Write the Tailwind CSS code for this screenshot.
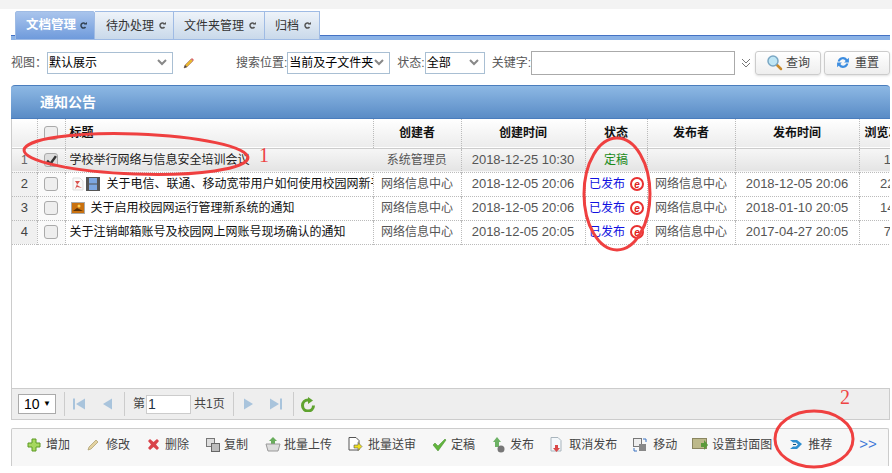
<!DOCTYPE html>
<html lang="zh-CN">
  <head>
    <meta charset="UTF-8" />
    <title>文档管理</title>
    <script src="https://cdn.jsdelivr.net/npm/@tailwindcss/browser@4"></script>
  </head>
  <body class="bg-white">
    <div class="relative w-[892px] h-[473px] overflow-hidden text-[12px] text-[#444] font-['Liberation_Sans','Noto_Sans_CJK_SC',sans-serif]">
      <div class="h-[9px] bg-[#f3f3f3]"></div>

      <!-- tabs -->
      <div class="ml-[11px] w-[879px] h-[31px] pt-[2px] pl-[4px] flex items-stretch relative border-b-[4px] border-[#8ab2e6]">
        <div class="absolute left-0 right-0 bottom-0 h-px bg-[#4472c4]"></div>
        <div class="relative w-[80px] h-[29px] flex items-center pl-[10px] gap-[4px] border border-[#9fbbe4] bg-gradient-to-b from-[#a9c4ec] to-[#6f9bdc] text-white font-bold text-[12.5px] rounded-t-[2px]">文档管理<svg width="7" height="7" viewBox="0 0 7 7"><path d="M5.500 2A2.500 2.500 0 1 0 5.500 5" fill="none" stroke="#345" stroke-width="1.500"/><path d="M4 2.500h3V0z" fill="#345"/></svg></div>
        <div class="relative w-[79px] h-[29px] flex items-center pl-[11px] gap-[5px] border border-[#9fbbe4] border-l-0 bg-gradient-to-b from-[#eef3f9] to-[#c9d9ea] text-[#333]">待办处理<svg width="7" height="7" viewBox="0 0 7 7"><path d="M5.500 2A2.500 2.500 0 1 0 5.500 5" fill="none" stroke="#555" stroke-width="1.500"/><path d="M4 2.500h3V0z" fill="#555"/></svg></div>
        <div class="relative w-[91px] h-[29px] flex items-center pl-[10px] gap-[5px] border border-[#9fbbe4] border-l-0 bg-gradient-to-b from-[#eef3f9] to-[#c9d9ea] text-[#333]">文件夹管理<svg width="7" height="7" viewBox="0 0 7 7"><path d="M5.500 2A2.500 2.500 0 1 0 5.500 5" fill="none" stroke="#555" stroke-width="1.500"/><path d="M4 2.500h3V0z" fill="#555"/></svg></div>
        <div class="relative w-[55px] h-[29px] flex items-center pl-[10px] gap-[5px] border border-[#9fbbe4] border-l-0 bg-gradient-to-b from-[#eef3f9] to-[#c9d9ea] text-[#333]">归档<svg width="7" height="7" viewBox="0 0 7 7"><path d="M5.500 2A2.500 2.500 0 1 0 5.500 5" fill="none" stroke="#555" stroke-width="1.500"/><path d="M4 2.500h3V0z" fill="#555"/></svg></div>
      </div>

      <!-- filters -->
      <div class="h-[45px] pl-[11px] flex items-center text-[#555] whitespace-nowrap">
        <span class="w-[36px] shrink-0">视图：</span>
        <div class="shrink-0 w-[126px] h-[22px] border border-[#a9bfd3] flex items-center justify-between pr-[5px] pl-px text-black">默认展示
          <svg width="10" height="7" viewBox="0 0 10 7"><path d="M1 1l4 4 4-4" fill="none" stroke="#888" stroke-width="2"/></svg>
        </div>
        <svg class="shrink-0 ml-[10px]" width="12" height="12" viewBox="0 0 12 12"><path d="M1 11l1-3 6-6 2 2-6 6z" fill="#e8b830" stroke="#a77" stroke-width=".6"/><path d="M8 2l1-1 2 2-1 1z" fill="#d66"/><path d="M1 11l1-3 2 2z" fill="#444"/></svg>
        <span class="shrink-0 ml-[41px]">搜索位置:</span>
        <div class="shrink-0 w-[103px] h-[22px] border border-[#a9bfd3] flex items-center justify-between pr-[5px] pl-px text-black">当前及子文件夹
          <svg width="10" height="7" viewBox="0 0 10 7"><path d="M1 1l4 4 4-4" fill="none" stroke="#888" stroke-width="2"/></svg>
        </div>
        <span class="shrink-0 ml-[7px]">状态:</span>
        <div class="shrink-0 w-[60px] h-[22px] border border-[#a9bfd3] flex items-center justify-between pr-[5px] pl-px text-black">全部
          <svg width="10" height="7" viewBox="0 0 10 7"><path d="M1 1l4 4 4-4" fill="none" stroke="#888" stroke-width="2"/></svg>
        </div>
        <span class="shrink-0 ml-[7px]">关键字:</span>
        <div class="shrink-0 w-[204px] h-[24px] border border-[#aaa] bg-white"></div>
        <svg class="shrink-0 ml-[6px]" width="10" height="10" viewBox="0 0 10 10"><path d="M1 1l4 4 4-4M1 5l4 4 4-4" fill="none" stroke="#777"/></svg>
        <button class="shrink-0 ml-[4px] w-[66px] h-[24px] rounded-[3px] border border-[#ccc] bg-gradient-to-b from-white to-[#eee] flex items-center justify-center gap-[3px] text-[#444] shadow-sm">
          <svg width="17" height="17" viewBox="0 0 17 17"><path d="M10 10l5 5" stroke="#c98a2b" stroke-width="2.500" stroke-linecap="round"/><circle cx="7" cy="7" r="5" fill="#bfe6f5" stroke="#7aa7c4" stroke-width="1.500"/></svg>查询
        </button>
        <button class="shrink-0 ml-[3px] w-[66px] h-[24px] rounded-[3px] border border-[#ccc] bg-gradient-to-b from-white to-[#eee] flex items-center justify-center gap-[4px] text-[#444] shadow-sm">
          <svg width="16" height="15" viewBox="0 0 14 14"><path d="M2 6a5 5 0 0 1 9-2l1.500-1.500V7H8l1.500-1.500A3 3 0 0 0 4 6zM12 8a5 5 0 0 1-9 2l-1.500 1.500V7H6l-1.500 1.500A3 3 0 0 0 10 8z" fill="#3d8de0"/></svg>重置
        </button>
      </div>

      <!-- panel -->
      <div class="ml-[11px] w-[879px] h-[34px] rounded-t-[4px] border-t border-[#4a7dbd] bg-gradient-to-b from-[#8db8e4] to-[#5a8cc6] border-b border-b-[#4a7dbd] pl-[29px] flex items-center text-white font-bold text-[14px]">通知公告</div>

      <div class="ml-[11px] w-[879px] h-[269px] overflow-hidden border-l border-[#ccc]">
        <table class="table-fixed border-collapse w-[903px]">
          <colgroup>
            <col class="w-[25px]" /><col class="w-[28px]" /><col class="w-[308px]" /><col class="w-[88px]" /><col class="w-[124px]" /><col class="w-[62px]" /><col class="w-[88px]" /><col class="w-[124px]" /><col class="w-[56px]" />
          </colgroup>
          <thead>
            <tr class="h-[29px] bg-gradient-to-b from-white to-[#ececec] text-[#111] font-bold border-b border-[#ccc]">
              <th class="border-r border-dotted border-[#bbb]"></th>
              <th class="border-r border-dotted border-[#bbb]"><div class="mx-auto w-[14px] h-[14px] rounded-[3px] border border-[#aaa] bg-[#eee]"></div></th>
              <th class="border-r border-dotted border-[#bbb] text-left pl-[4px] font-bold">标题</th>
              <th class="border-r border-dotted border-[#bbb]">创建者</th>
              <th class="border-r border-dotted border-[#bbb]">创建时间</th>
              <th class="border-r border-dotted border-[#bbb]">状态</th>
              <th class="border-r border-dotted border-[#bbb]">发布者</th>
              <th class="border-r border-dotted border-[#bbb]">发布时间</th>
              <th class="text-left pl-[5px] whitespace-nowrap">浏览次数</th>
            </tr>
          </thead>
          <tbody class="text-center text-[#555]">
            <tr class="h-[24px] bg-gradient-to-b from-[#f7f7f7] to-[#e4e4e4] border-b border-dotted border-[#bbb]">
              <td class="text-[#666]">1</td>
              <td class="border-x border-dotted border-[#bbb]"><div class="mx-auto w-[14px] h-[14px] rounded-[3px] border border-[#aaa] bg-[#ddd] flex items-center justify-center"><svg width="11" height="11" viewBox="0 0 10 10"><path d="M1 5l3 3 5-7" fill="none" stroke="#333" stroke-width="2.200"/></svg></div></td>
              <td class="text-left pl-[4px] text-[#222] whitespace-nowrap overflow-hidden">学校举行网络与信息安全培训会议</td>
              <td class="border-r border-dotted border-[#bbb]">系统管理员</td>
              <td class="border-r border-dotted border-[#bbb] text-[13px]">2018-12-25 10:30</td>
              <td class="border-r border-dotted border-[#bbb] text-[#1a8a1a]">定稿</td>
              <td class="border-r border-dotted border-[#bbb]"></td>
              <td class="border-r border-dotted border-[#bbb]"></td>
              <td class="text-[13px]">1</td>
            </tr>
            <tr class="h-[24px] border-b border-dotted border-[#bbb]">
              <td class="bg-[#f0f0f0] text-[#444] text-[13px]">2</td>
              <td class="bg-[#fafafa] border-x border-dotted border-[#bbb]"><div class="mx-auto w-[14px] h-[14px] rounded-[3px] border border-[#aaa] bg-[#eee]"></div></td>
              <td class="text-left pl-[6px] text-[#111] border-r border-dotted border-[#bbb]">
                <div class="flex items-center whitespace-nowrap overflow-hidden w-[301px]">
                  <svg class="shrink-0" width="12" height="14" viewBox="0 0 12 14"><path d="M1 1h7l3 3v9H1z" fill="#fafafa" stroke="#ddd"/><path d="M3 4h5L5 8l5 3-5-1-2 2 2-5z" fill="#d9534f"/></svg>
                  <svg class="shrink-0 ml-[2px] mr-[7px]" width="14" height="14" viewBox="0 0 14 14"><rect width="14" height="14" fill="#555"/><rect x="3" y="1" width="8" height="5.500" fill="#7da7e0"/><rect x="3" y="7.500" width="8" height="5.500" fill="#7da7e0"/></svg>
                  <span class="shrink-0">关于电信、联通、移动宽带用户如何使用校园网新平台的通知</span>
                </div>
              </td>
              <td class="border-r border-dotted border-[#bbb]">网络信息中心</td>
              <td class="border-r border-dotted border-[#bbb] text-[13px]">2018-12-05 20:06</td>
              <td class="border-r border-dotted border-[#bbb] text-[#1010e0]"><div class="flex items-center justify-center gap-[5px] pl-px">已发布<span class="w-[14px] h-[14px] rounded-full border-2 border-[#e83030] text-[#e02020] text-[10px] font-bold italic flex items-center justify-center">e</span></div></td>
              <td class="border-r border-dotted border-[#bbb]">网络信息中心</td>
              <td class="border-r border-dotted border-[#bbb] text-[13px]">2018-12-05 20:06</td>
              <td class="text-[13px]">22</td>
            </tr>
            <tr class="h-[24px] border-b border-dotted border-[#bbb]">
              <td class="bg-[#f0f0f0] text-[#444] text-[13px]">3</td>
              <td class="bg-[#fafafa] border-x border-dotted border-[#bbb]"><div class="mx-auto w-[14px] h-[14px] rounded-[3px] border border-[#aaa] bg-[#eee]"></div></td>
              <td class="text-left pl-[5px] text-[#111] whitespace-nowrap overflow-hidden border-r border-dotted border-[#bbb]">
                <div class="flex items-center">
                  <svg class="shrink-0 mr-[6px]" width="14" height="12" viewBox="0 0 14 12"><rect x=".5" y=".5" width="13" height="11" fill="#c9710f" stroke="#aaa"/><path d="M2 9l4-3 6 3z" fill="#5a3208"/><circle cx="8" cy="4" r="1.500" fill="#ffd257"/></svg>
                  关于启用校园网运行管理新系统的通知
                </div>
              </td>
              <td class="border-r border-dotted border-[#bbb]">网络信息中心</td>
              <td class="border-r border-dotted border-[#bbb] text-[13px]">2018-12-05 20:06</td>
              <td class="border-r border-dotted border-[#bbb] text-[#1010e0]"><div class="flex items-center justify-center gap-[5px] pl-px">已发布<span class="w-[14px] h-[14px] rounded-full border-2 border-[#e83030] text-[#e02020] text-[10px] font-bold italic flex items-center justify-center">e</span></div></td>
              <td class="border-r border-dotted border-[#bbb]">网络信息中心</td>
              <td class="border-r border-dotted border-[#bbb] text-[13px]">2018-01-10 20:05</td>
              <td class="text-[13px]">14</td>
            </tr>
            <tr class="h-[24px] border-b border-dotted border-[#bbb]">
              <td class="bg-[#f0f0f0] text-[#444] text-[13px]">4</td>
              <td class="bg-[#fafafa] border-x border-dotted border-[#bbb]"><div class="mx-auto w-[14px] h-[14px] rounded-[3px] border border-[#aaa] bg-[#eee]"></div></td>
              <td class="text-left pl-[4px] text-[#111] whitespace-nowrap overflow-hidden border-r border-dotted border-[#bbb]">关于注销邮箱账号及校园网上网账号现场确认的通知</td>
              <td class="border-r border-dotted border-[#bbb]">网络信息中心</td>
              <td class="border-r border-dotted border-[#bbb] text-[13px]">2018-12-05 20:05</td>
              <td class="border-r border-dotted border-[#bbb] text-[#1010e0]"><div class="flex items-center justify-center gap-[5px] pl-px">已发布<span class="w-[14px] h-[14px] rounded-full border-2 border-[#e83030] text-[#e02020] text-[10px] font-bold italic flex items-center justify-center">e</span></div></td>
              <td class="border-r border-dotted border-[#bbb]">网络信息中心</td>
              <td class="border-r border-dotted border-[#bbb] text-[13px]">2017-04-27 20:05</td>
              <td class="text-[13px]">7</td>
            </tr>
          </tbody>
        </table>
      </div>

      <!-- pagination -->
      <div class="ml-[11px] w-[879px] h-[32px] border border-[#ccc] bg-[#eee] flex items-center text-[#444] pl-[6px]">
        <div class="w-[38px] h-[20px] border border-[#aaa] bg-white flex items-center justify-between pl-[5px] pr-[4px] text-[14px] text-black">10<span class="text-[8px]">▼</span></div>
        <div class="ml-[8px] w-px h-[24px] bg-[#ccc]"></div>
        <svg class="ml-[8px]" width="12" height="12" viewBox="0 0 12 12" fill="#a9c4dc"><rect width="2" height="11" y=".5"/><path d="M12 .5v11L3 6z"/></svg>
        <svg class="ml-[18px]" width="9" height="12" viewBox="0 0 9 12" fill="#a9c4dc"><path d="M9 .5v11L0 6z"/></svg>
        <div class="ml-[12px] w-px h-[24px] bg-[#ccc]"></div>
        <span class="ml-[8px]">第</span>
        <div class="ml-px w-[45px] h-[19px] border border-[#ccc] bg-white text-[14px] text-[#234] pl-px leading-[16px]">1</div>
        <span class="ml-[3px] text-[12px]">共1页</span>
        <div class="ml-[8px] w-px h-[24px] bg-[#ccc]"></div>
        <svg class="ml-[10px]" width="9" height="12" viewBox="0 0 9 12" fill="#a9c4dc"><path d="M0 .5v11L9 6z"/></svg>
        <svg class="ml-[17px]" width="12" height="12" viewBox="0 0 12 12" fill="#a9c4dc"><path d="M0 .5v11L9 6z"/><rect x="10" y=".5" width="2" height="11"/></svg>
        <div class="ml-[11px] w-px h-[24px] bg-[#ccc]"></div>
        <svg class="ml-[7px]" width="14" height="15" viewBox="0 0 14 15"><path d="M7 3a5.500 5.500 0 1 0 5.500 5.500" fill="none" stroke="#5fa32f" stroke-width="3"/><path d="M7 0l5 3.500L7 7z" fill="#5fa32f"/></svg>
      </div>

      <!-- toolbar -->
      <div class="mt-[8px] ml-[11px] w-[878px] h-[38px] border-l border-r border-t border-[#ccc] rounded-t-[2px] bg-[#f7f7f7] flex items-center pl-[15px] text-[#444] whitespace-nowrap pb-[6px]">
        <svg width="14" height="14" viewBox="0 0 14 14"><path d="M5 1h4v4h4v4H9v4H5V9H1V5h4z" fill="#a6d85e" stroke="#5c9a25"/></svg>
        <span class="ml-[5px]">增加</span>
        <svg class="ml-[17px]" width="12" height="12" viewBox="0 0 12 12"><path d="M1 11l1-3 7-7 2 2-7 7z" fill="#e3d2a0" stroke="#a89968" stroke-width=".7"/></svg>
        <span class="ml-[7px]">修改</span>
        <svg class="ml-[17px]" width="13" height="13" viewBox="0 0 13 13"><path d="M3 1l3.500 3L10 1l2 2-3 3.500 3 3.500-2 2-3.500-3L3 12l-2-2 3-3.500L1 3z" fill="#d9434a"/></svg>
        <span class="ml-[5px]">删除</span>
        <svg class="ml-[17px]" width="14" height="14" viewBox="0 0 14 14"><rect x=".5" y=".5" width="8" height="8" fill="#ddd" stroke="#777"/><rect x="5.500" y="5.500" width="8" height="8" fill="#bbb" stroke="#666"/></svg>
        <span class="ml-[4px]">复制</span>
        <svg class="ml-[17px]" width="16" height="15" viewBox="0 0 16 15"><path d="M8 0l4 4h-2v4H6V4H4z" fill="#69ad5c"/><path d="M1 7h14l-2 7H3z" fill="#ddd" stroke="#999"/></svg>
        <span class="ml-[3px]">批量上传</span>
        <svg class="ml-[16px]" width="15" height="15" viewBox="0 0 15 15"><path d="M1 .5h7l3 3V13H1z" fill="#fff" stroke="#555"/><path d="M6 8h4V5.500L14 9.500l-4 4V11H6z" fill="#f0e020" stroke="#555" stroke-width=".6"/></svg>
        <span class="ml-[5px]">批量送审</span>
        <svg class="ml-[16px]" width="15" height="14" viewBox="0 0 15 14"><path d="M1 7l2-2 3 3 7-7 1 1-8 11z" fill="#62b53d" stroke="#3f8a26" stroke-width=".5"/></svg>
        <span class="ml-[4px]">定稿</span>
        <svg class="ml-[16px]" width="15" height="16" viewBox="0 0 15 16"><path d="M6 0l4 5H8v5H4V5H2z" fill="#6db265"/><circle cx="10" cy="12" r="3.500" fill="#777"/></svg>
        <span class="ml-[4px]">发布</span>
        <svg class="ml-[16px]" width="13" height="16" viewBox="0 0 13 16"><path d="M1 .5h7l3 3V14H1z" fill="#f4f8fb" stroke="#a9b5bd"/><path d="M5 8h3v3h2l-3.500 4L3 11h2z" fill="#d94848"/></svg>
        <span class="ml-[6px]">取消发布</span>
        <svg class="ml-[16px]" width="14" height="14" viewBox="0 0 14 14"><rect x=".5" y=".5" width="8" height="8" fill="#eee" stroke="#777"/><rect x="6" y="6" width="7" height="7" fill="#888"/><path d="M10 1h3v3M1 10v3h3" fill="none" stroke="#3b73c2"/></svg>
        <span class="ml-[6px]">移动</span>
        <svg class="ml-[15px]" width="16" height="13" viewBox="0 0 16 13"><rect x=".5" y=".5" width="14" height="10" fill="#bdb98a" stroke="#8a8660"/><path d="M9 5h3V2l4 5-4 5V9H9z" fill="#5b9a3a"/></svg>
        <span class="ml-[4px]">设置封面图</span>
        <svg class="ml-[17px]" width="14" height="12" viewBox="0 0 14 12"><path d="M1 1h7l5 4-5 5H1l3-2.500h3L9 5.500 7 3.500H4z" fill="#2f8fd0"/><path d="M4 5.500h3" stroke="#14507a"/></svg>
        <span class="ml-[5px]">推荐</span>
        <span class="ml-[27px] text-[#3f79d8] text-[15px]">&gt;&gt;</span>
      </div>

      <!-- hand-drawn marks over the screenshot -->
      <svg class="absolute inset-0 pointer-events-none" width="892" height="473" fill="none" stroke="#ef4040" stroke-width="3">
        <ellipse cx="136" cy="154" rx="112" ry="20" transform="rotate(2 136 154)" />
        <ellipse cx="617" cy="194" rx="33" ry="56" />
        <ellipse cx="814" cy="439" rx="39" ry="28" />
      </svg>
      <span class="absolute left-[259px] top-[140px] font-['Liberation_Serif',serif] text-[20px] text-[#ee4444]">1</span>
      <span class="absolute left-[840px] top-[382px] font-['Liberation_Serif',serif] text-[20px] text-[#ee4444]">2</span>
    </div>
  </body>
</html>
